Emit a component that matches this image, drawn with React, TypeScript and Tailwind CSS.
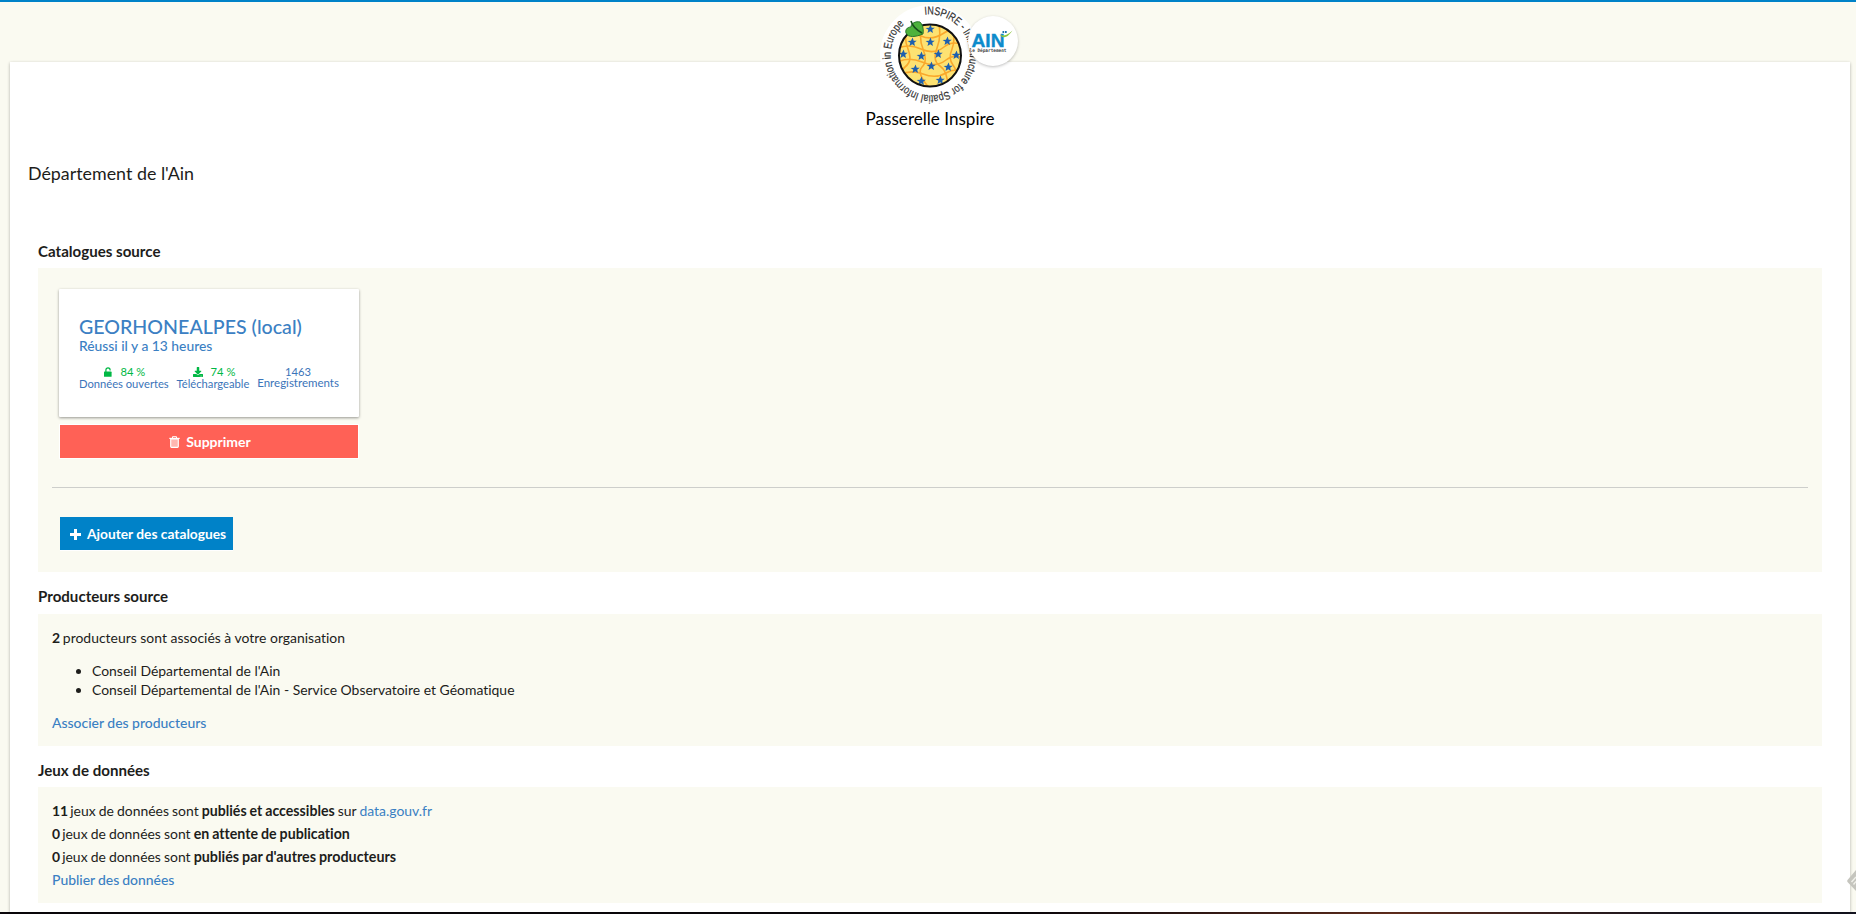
import type { ReactNode } from "react";
import { FaDownload } from "react-icons/fa";

const STARS: [number, number][] = [
  [50, 24], [32, 37], [50, 37], [67, 36], [23, 49], [41, 51], [58, 49], [76, 50],
  [35, 64], [51, 61], [68, 62], [41, 76], [60, 75],
];

function Star({ x, y }: { x: number; y: number }) {
  return (
    <polygon
      transform={`translate(${x} ${y}) scale(1.05)`}
      points="0.6,-4.2 1.6,-1.3 4.5,-1.1 2.1,0.8 2.8,3.8 0.2,2.2 -2.4,3.8 -1.6,0.8 -4.2,-0.9 -1,-1.3"
      fill="#1d5fae"
    />
  );
}

function InspireLogo() {
  return (
    <svg className="h-[100px] w-[100px] overflow-visible" viewBox="0 0 100 100">
      <defs>
        <path id="ring" d="M 44.7 9.7 A 40.6 40.6 0 0 1 55.9 90.1 A 40.6 40.6 0 0 1 44.7 9.7" />
        <clipPath id="fruit">
          <circle cx="50" cy="50.5" r="31" />
        </clipPath>
      </defs>
      <circle cx="50" cy="50" r="50" fill="#fff" />
      <circle cx="50" cy="50.5" r="31" fill="#fde272" />
      <g clipPath="url(#fruit)">
        <g fill="none" stroke="#f9a82b" strokeWidth="1.6">
          <path d="M16 32 Q30 26 41 31 T64 28 T86 30" />
          <path d="M16 44 Q28 38 41 44 T64 42 T86 42" />
          <path d="M16 58 Q28 51 42 57 T66 55 T86 56" />
          <path d="M16 71 Q30 64 43 69 T66 68 T86 68" />
          <path d="M28 20 Q23 32 28 44 T25 62 T32 84" />
          <path d="M43 16 Q38 32 43 44 T42 62 T50 84" />
          <path d="M58 16 Q62 30 57 43 T60 61 T68 84" />
          <path d="M72 20 Q76 34 72 44 T73 60 T78 82" />
        </g>
        {STARS.map(([x, y]) => (
          <Star key={`${x}-${y}`} x={x} y={y} />
        ))}
      </g>
      <circle cx="50" cy="50.5" r="31" fill="none" stroke="#111" strokeWidth="2" />
      <path
        d="M43 29 C36 32 28 33 26 28 C25 25 27 22 31 22 C31 18 36 16 40 17 C42 19 44 23 43 29Z"
        fill="#4cb23c"
        stroke="#1c6b24"
        strokeWidth="0.9"
      />
      <path d="M31 16 Q33 23 42 28" fill="none" stroke="#174f1c" strokeWidth="1.6" />
      <text className="font-['Liberation_Sans',sans-serif] text-[11.3px]" fill="#333" stroke="#333" strokeWidth="0.2">
        <textPath href="#ring" textLength="228" lengthAdjust="spacingAndGlyphs">
          INSPIRE - Infrastructure for Spatial Information in Europe
        </textPath>
      </text>
    </svg>
  );
}

function AinLogo() {
  return (
    <svg className="h-[50px] w-[50px] rounded-full bg-white shadow-[0_1px_3px_rgba(0,0,0,0.25)]" viewBox="0 0 50 50">
      <text x="3.5" y="31" className="font-['Liberation_Sans',sans-serif] text-[19px] font-bold" fill="#0d8bcb" stroke="#0d8bcb" strokeWidth="0.4" textLength="33" lengthAdjust="spacingAndGlyphs">
        AIN
      </text>
      <path d="M31.5 18.5 Q37 25.5 44.5 14.5 Q41 18 38 19 Q35 20 31.5 18.5Z" fill="#8cc63f" />
      <path d="M34.5 15h1.7v2h-1.7zM37 15h1.7v2h-1.7z" fill="#1b6fae" />
      <text x="1.5" y="35.5" className="font-['DejaVu_Sans_Mono',monospace] text-[4.8px] font-bold" fill="#444" textLength="37" lengthAdjust="spacingAndGlyphs">
        le Département
      </text>
    </svg>
  );
}

function UnlockIcon() {
  return (
    <svg className="h-[10px] w-[8px]" viewBox="0 0 8 10">
      <path d="M1.9 5V2.9a2.1 2.1 0 0 1 4.2 0V3.6" fill="none" stroke="currentColor" strokeWidth="1.2" />
      <rect x="0" y="4.6" width="7.6" height="5.2" rx="0.6" fill="currentColor" />
    </svg>
  );
}

function TrashIcon() {
  return (
    <svg className="h-[12px] w-[11px]" viewBox="0 0 11 12">
      <path d="M3.5 2V0.7h4V2" fill="none" stroke="#fff" strokeWidth="1" />
      <path d="M0.3 1.8h10.4v1.2H0.3z" fill="#fff" />
      <path d="M1.7 3v7.6q0 .8.8.8h6q.8 0 .8-.8V3z" fill="#ffb5af" stroke="#fff" strokeWidth="1.1" />
    </svg>
  );
}

function PlusIcon() {
  return (
    <svg className="h-[11px] w-[11px]" viewBox="0 0 11 11">
      <path d="M4 0h3v4h4v3H7v4H4V7H0V4h4z" fill="#fff" />
    </svg>
  );
}

function Section({ title, heading, panel, children }: { title: string; heading: string; panel: string; children: ReactNode }) {
  return (
    <section>
      <h4 className={`text-[15.1px] leading-5 font-bold ${heading}`}>{title}</h4>
      <div className={`bg-[#fafaf1] px-[14px] ${panel}`}>{children}</div>
    </section>
  );
}

function Metric({ icon, value, label, green }: { icon?: ReactNode; value: string; label: string; green?: boolean }) {
  return (
    <div className="flex flex-col items-center whitespace-nowrap">
      <div className={`flex h-3 items-center gap-[8px] ${green ? "pl-[2px] text-[#00b844]" : ""}`}>
        {icon}
        <span>{value}</span>
      </div>
      <div className={green ? "leading-[12px]" : "text-[11.5px] leading-[10px]"}>{label}</div>
    </div>
  );
}

export default function App() {
  return (
    <div className="flex h-[914px] flex-col overflow-hidden bg-[#fafaf1] font-[Lato,sans-serif] text-[13.95px] text-[#1d1d1b] [font-variant-ligatures:none]">
      <header className="h-[62px] shrink-0 border-t-2 border-[#0082c8]" />
      <main className="relative mr-1.5 ml-2.5 h-[850px] shrink-0 bg-white shadow-[0_1px_3px_rgba(0,0,0,0.3)]">
        <div className="absolute -top-[57px] left-[870px] h-[100px] w-[100px]">
          <InspireLogo />
          <div className="absolute top-[10.5px] left-[88px]">
            <AinLogo />
          </div>
        </div>
        <h1 className="pt-[45px] text-center text-[17.1px] leading-6 text-black">Passerelle Inspire</h1>
        <h2 className="mt-[30px] pl-[18px] text-[17.85px] leading-6">Département de l'Ain</h2>

        <div className="mx-7">
          <Section title="Catalogues source" heading="pt-[56px] pb-[7px]" panel="h-[304px] pt-[21px]">
            <div className="ml-[7px] w-[300px]">
              <a className="flex h-[128px] flex-col rounded-[1px] bg-white px-5 pt-[25px] font-medium text-[#3b80c3] shadow-[0_1px_3px_rgba(0,0,0,0.4)]">
                <div className="text-[19.6px] leading-[25px]">GEORHONEALPES (local)</div>
                <div className="text-[13.85px] leading-[14px]">Réussi il y a 13 heures</div>
                <div className="mt-[13px] flex justify-between text-[11.2px] font-normal text-[#3b74b9]">
                  <Metric green icon={<UnlockIcon />} value="84 %" label="Données ouvertes" />
                  <Metric green icon={<FaDownload className="size-[10px]" />} value="74 %" label="Téléchargeable" />
                  <Metric value="1463" label="Enregistrements" />
                </div>
              </a>
              <button className="mx-px mt-2 flex h-[33px] w-[298px] items-center justify-center gap-[6px] bg-[#ff6156] pl-[2px] text-[14px] font-bold text-white shadow-[0_0_0_1px_#fff]">
                <TrashIcon />
                Supprimer
              </button>
            </div>
            <hr className="mt-[29px] border-[#cdcecb]" />
            <button className="mt-[29px] ml-2 flex h-[33px] w-[173px] items-center gap-[6px] bg-[#0082c8] pt-px pl-[10px] text-[13.75px] font-bold whitespace-nowrap text-white shadow-[0_1px_0_#fff]">
              <PlusIcon />
              Ajouter des catalogues
            </button>
          </Section>

          <Section title="Producteurs source" heading="pt-[14px] pb-[8px]" panel="h-[132px] pt-[14px]">
            <p className="leading-5">
              <b className="mr-[-0.8px]">2</b> producteurs sont associés à votre organisation
            </p>
            <ul className="mt-[13px] list-disc pl-10 leading-[19px]">
              <li>Conseil Départemental de l'Ain</li>
              <li>Conseil Départemental de l'Ain - Service Observatoire et Géomatique</li>
            </ul>
            <a className="mt-[14px] block leading-5 font-medium text-[#3b80c3]">Associer des producteurs</a>
          </Section>

          <Section title="Jeux de données" heading="pt-[14px] pb-[7px]" panel="h-[116px] pt-[12px]">
            <div className="leading-[23px] [word-spacing:-0.5px]">
              <p>
                <b className="mr-[-1px]">11</b> jeux de données sont <b className="text-[14.15px]">publiés et accessibles</b> sur <a className="text-[#3b80c3]">data.gouv.fr</a>
              </p>
              <p>
                <b className="mr-[-1px]">0</b> jeux de données sont <b className="text-[14.2px]">en attente de publication</b>
              </p>
              <p>
                <b className="mr-[-1px]">0</b> jeux de données sont <b className="text-[14.3px]">publiés par d'autres producteurs</b>
              </p>
              <a className="font-medium text-[#3b80c3]">Publier des données</a>
            </div>
          </Section>
        </div>

        <svg className="absolute top-[807px] -right-[6px] h-[24px] w-[10px]" viewBox="0 0 10 24">
          <path d="M10 1 L1.5 11 Q0.8 12 1.5 13 L10 22" fill="#c5c5be" />
          <path d="M10 8 L5.5 13 M10 12.5 L7.5 15.5" stroke="#f1f1ea" strokeWidth="1.4" />
        </svg>
      </main>
      <footer className="h-0.5 shrink-0 bg-linear-to-r from-[#0b070b] from-55% via-[#6e3320] via-75% to-[#141420] to-92%" />
    </div>
  );
}
